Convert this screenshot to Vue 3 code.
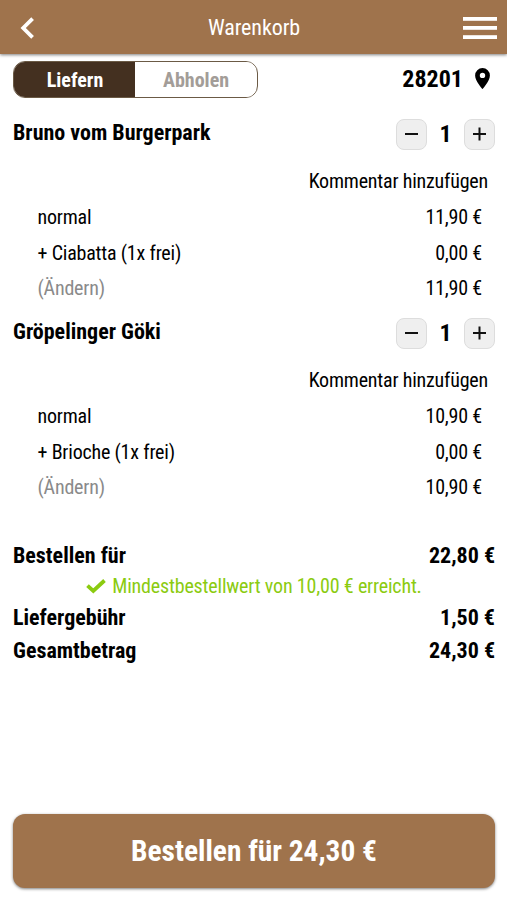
<template>
  <div class="page">
    <header class="topbar">
      <button class="icon-btn" title="Zurück">
        <svg width="14" height="22" viewBox="0 0 14 22" fill="none" stroke="#fff" stroke-width="3.8">
          <path d="M12.6 1.6 3.2 11l9.4 9.4" />
        </svg>
      </button>
      <h1 class="topbar-title">Warenkorb</h1>
      <button class="icon-btn menu-btn" title="Menü">
        <svg width="34" height="24" viewBox="0 0 34 24" fill="#fff">
          <rect y="1" width="34" height="3.8" />
          <rect y="10" width="34" height="3.8" />
          <rect y="19.2" width="34" height="3.8" />
        </svg>
      </button>
    </header>

    <div class="delivery">
      <div class="toggle">
        <button :class="['toggle-btn', mode === 'liefern' ? 'toggle-active' : '']" @click="mode = 'liefern'">Liefern</button>
        <button :class="['toggle-btn', mode === 'abholen' ? 'toggle-active' : '']" @click="mode = 'abholen'">Abholen</button>
      </div>
      <div class="zip">
        <span>28201</span>
        <svg width="15" height="21" viewBox="0 0 15 21">
          <path fill="#000" fill-rule="evenodd" d="M7.5 0A7.4 7.4 0 0 0 .1 7.4C.1 12.8 7.5 21 7.5 21s7.4-8.2 7.4-13.6A7.4 7.4 0 0 0 7.5 0zm0 4.7a2.7 2.7 0 1 1 0 5.4 2.7 2.7 0 0 1 0-5.4z" />
        </svg>
      </div>
    </div>

    <main class="cart">
      <section v-for="item in items" :key="item.name" class="item">
        <div class="item-head">
          <h2 class="item-name">{{ item.name }}</h2>
          <div class="stepper">
            <button class="step-btn" title="Weniger" @click="decrease(item)">
              <svg width="16" height="16" viewBox="0 0 16 16" stroke="#111" stroke-width="2">
                <path d="M1 8h13" />
              </svg>
            </button>
            <span class="count">{{ item.count }}</span>
            <button class="step-btn" title="Mehr" @click="item.count++">
              <svg width="16" height="16" viewBox="0 0 16 16" stroke="#111" stroke-width="2">
                <path d="M1 8h13M7.5 1.5v13" />
              </svg>
            </button>
          </div>
        </div>
        <div class="comment">Kommentar hinzufügen</div>
        <div v-for="option in item.options" :key="option.label" class="option">
          <span>{{ option.label }}</span>
          <span>{{ formatPrice(option.price) }}</span>
        </div>
        <div class="option">
          <span class="change">(Ändern)</span>
          <span>{{ formatPrice(itemTotal(item)) }}</span>
        </div>
      </section>
    </main>

    <div class="summary">
      <div class="sum-row">
        <span>Bestellen für</span>
        <span>{{ formatPrice(subtotal) }}</span>
      </div>
      <div v-if="subtotal >= minimum" class="minimum">
        <svg width="20" height="15" viewBox="0 0 20 15" fill="none" stroke="#8bcb10" stroke-width="3.8">
          <path d="M1.5 6.7 7.3 12 18.5 1.5" />
        </svg>
        <span>Mindestbestellwert von {{ formatPrice(minimum) }} erreicht.</span>
      </div>
      <div class="sum-row">
        <span>Liefergebühr</span>
        <span>{{ formatPrice(fee) }}</span>
      </div>
      <div class="sum-row">
        <span>Gesamtbetrag</span>
        <span>{{ formatPrice(total) }}</span>
      </div>
    </div>

    <button class="order-btn">Bestellen für {{ formatPrice(total) }}</button>
  </div>
</template>

<script setup>
import { computed, ref } from 'vue';

const mode = ref('liefern');
const minimum = 10;
const fee = 1.5;

const items = ref([
  {
    name: 'Bruno vom Burgerpark',
    count: 1,
    options: [
      { label: 'normal', price: 11.9 },
      { label: '+ Ciabatta (1x frei)', price: 0 }
    ]
  },
  {
    name: 'Gröpelinger Göki',
    count: 1,
    options: [
      { label: 'normal', price: 10.9 },
      { label: '+ Brioche (1x frei)', price: 0 }
    ]
  }
]);

const itemTotal = (item) => {
  return item.count * item.options.reduce((sum, option) => sum + option.price, 0);
};

const subtotal = computed(() => {
  return items.value.reduce((sum, item) => sum + itemTotal(item), 0);
});

const total = computed(() => subtotal.value + fee);

const formatPrice = (value) => {
  return value.toFixed(2).replace('.', ',') + ' €';
};

const decrease = (item) => {
  if (item.count > 1) {
    item.count--;
  }
};
</script>

<style>
body {
  background: #fff;
}
</style>

<style scoped>
.page {
  display: flex;
  flex-direction: column;
  height: 900px;
  box-sizing: border-box;
  padding-bottom: 12px;
  font-family: 'Roboto Condensed', Roboto, sans-serif;
  font-stretch: 75%;
  font-size: 20px;
  color: #000;
}

button {
  font: inherit;
  border: none;
  padding: 0;
  cursor: pointer;
}

.topbar {
  display: flex;
  align-items: center;
  justify-content: space-between;
  height: 54px;
  flex: none;
  box-sizing: border-box;
  padding: 2px 10px 0 20px;
  background: #9f734c;
  box-shadow: 0 1px 3px rgba(0, 0, 0, 0.5);
}

.icon-btn {
  display: flex;
  width: 34px;
  background: none;
}

.menu-btn {
  width: 43px;
  justify-content: flex-end;
}

.topbar-title {
  margin: 0;
  padding-bottom: 1px;
  font-size: 22px;
  font-weight: 400;
  letter-spacing: -0.1px;
  color: #fff;
}

.delivery {
  display: flex;
  align-items: center;
  justify-content: space-between;
  padding: 7px 17px 0 13px;
}

.toggle {
  display: flex;
  width: 245px;
  height: 37px;
  box-sizing: border-box;
  border: 1px solid #6b5a45;
  border-radius: 12px;
  overflow: hidden;
}

.toggle-btn {
  width: 121px;
  padding-left: 1px;
  font-weight: 700;
  background: #fff;
  color: #a39d98;
}

.toggle-active {
  background: #443020;
  color: #fff;
}

.zip {
  display: flex;
  align-items: center;
  gap: 12px;
  padding-bottom: 2px;
  font-size: 24px;
  font-weight: 700;
}

.cart {
  padding: 21px 12px 0 13px;
}

.item {
  margin-bottom: 12.7px;
}

.item-head {
  display: flex;
  justify-content: space-between;
  height: 30px;
}

.item-name {
  margin: 0;
  font-size: 22px;
  line-height: 28px;
  font-weight: 700;
}

.stepper {
  display: flex;
  align-items: center;
}

.step-btn {
  display: flex;
  align-items: center;
  justify-content: center;
  width: 31px;
  height: 31px;
  box-sizing: border-box;
  border: 1px solid #ddd;
  border-radius: 8px;
  background: #efefef;
}

.count {
  width: 37px;
  text-align: center;
  font-size: 24px;
  font-weight: 700;
}

.comment {
  margin-top: 14px;
  padding-right: 7px;
  text-align: right;
  line-height: 36px;
  letter-spacing: -0.2px;
}

.option {
  display: flex;
  justify-content: space-between;
  padding: 1px 13px 0 24.5px;
  line-height: 35.5px;
  margin-bottom: -1px;
  letter-spacing: -0.2px;
}

.change {
  color: #8a8a8a;
}

.summary {
  padding: 22px 12px 0 13px;
}

.sum-row {
  display: flex;
  justify-content: space-between;
  font-size: 22px;
  line-height: 33px;
  font-weight: 700;
}

.minimum {
  display: flex;
  align-items: center;
  justify-content: center;
  gap: 6px;
  line-height: 29px;
  letter-spacing: -0.18px;
  color: #8bcb10;
}

.order-btn {
  height: 74px;
  margin: auto 12px 0 13px;
  border-radius: 12px;
  background: #9f734c;
  box-shadow: 0 1px 3px rgba(0, 0, 0, 0.5);
  color: #fff;
  font-size: 29.4px;
  font-weight: 700;
}
</style>
